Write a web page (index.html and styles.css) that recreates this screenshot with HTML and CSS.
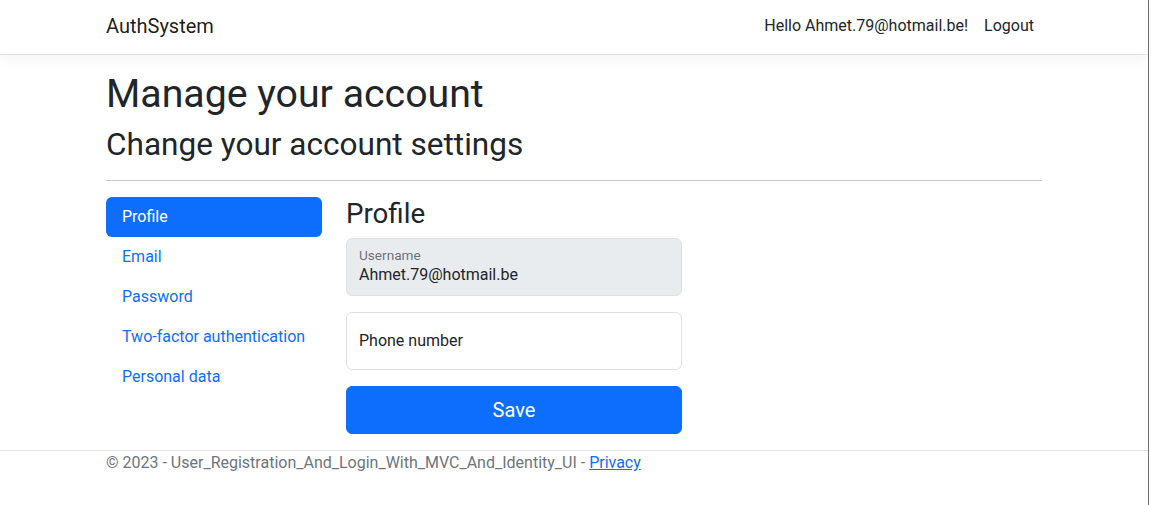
FILE: index.html
```html
<!DOCTYPE html>
<html lang="en">
<head>
<meta charset="utf-8">
<title>Profile - AuthSystem</title>
<link rel="stylesheet" href="styles.css">
</head>
<body>
<div class="page">
  <header class="navbar">
    <div class="container nav-inner">
      <a class="brand" href="#">AuthSystem</a>
      <ul class="nav-right">
        <li><a class="nav-link" href="#">Hello Ahmet.79@hotmail.be!</a></li>
        <li><a class="nav-link" href="#">Logout</a></li>
      </ul>
    </div>
  </header>
  <main class="container main">
    <h1 class="title">Manage your account</h1>
    <div>
      <h2 class="subtitle">Change your account settings</h2>
      <hr class="rule">
      <div class="row">
        <nav class="side">
          <a class="pill active" href="#">Profile</a>
          <a class="pill" href="#">Email</a>
          <a class="pill" href="#">Password</a>
          <a class="pill" href="#">Two-factor authentication</a>
          <a class="pill" href="#">Personal data</a>
        </nav>
        <section class="content">
          <h3 class="section-title">Profile</h3>
          <form class="form">
            <div class="field disabled">
              <span class="field-label">Username</span>
              <span class="field-value">Ahmet.79@hotmail.be</span>
            </div>
            <div class="field">
              <span class="field-placeholder">Phone number</span>
            </div>
            <button type="button" class="btn-save">Save</button>
          </form>
        </section>
      </div>
    </div>
  </main>
  <footer class="footer">
    <div class="container">
      <span class="muted">© 2023 - User_Registration_And_Login_With_MVC_And_Identity_UI - </span><a class="footer-link" href="#">Privacy</a>
    </div>
  </footer>
</div>
</body>
</html>
```

FILE: styles.css
```css
* { box-sizing: border-box; }
html, body { margin: 0; padding: 0; }
body {
  font-family: Roboto, "Liberation Sans", sans-serif;
  font-size: 16px;
  line-height: 1.5;
  color: #212529;
  background: #fff;
  overflow: hidden;
}
.page {
  width: 1149px;
  min-height: 505px;
  border-right: 1px solid #6e6e6e;
}
.container {
  width: 960px;
  margin: 0 auto;
  padding: 0 12px;
}
.navbar {
  height: 55px;
  border-bottom: 1px solid #dee2e6;
  box-shadow: 0 4px 12px rgba(0,0,0,.05);
  margin-bottom: 16px;
}
.nav-inner {
  height: 100%;
  display: flex;
  align-items: center;
  justify-content: space-between;
}
.brand {
  font-size: 20px;
  line-height: 30px;
  color: rgba(0,0,0,.9);
  text-decoration: none;
  margin-top: -3px;
}
.nav-right {
  list-style: none;
  margin: 0;
  padding: 0;
  display: flex;
  margin-top: -2px;
}
.nav-link {
  display: block;
  padding: 0 8px;
  color: #212529;
  text-decoration: none;
}
.main { padding-bottom: 16px; }
.title {
  font-size: 39.27px;
  font-weight: 400;
  line-height: 1.2;
  margin: 0 0 8px;
}
.subtitle {
  font-size: 31.56px;
  font-weight: 400;
  line-height: 1.2;
  margin: 0;
}
.rule {
  margin: 16px 0;
  border: 0;
  border-top: 1px solid #c8c9ca;
}
.row {
  display: flex;
  margin: 0 -12px;
}
.side {
  width: 240px;
  padding: 0 12px;
  display: flex;
  flex-direction: column;
}
.pill {
  display: block;
  padding: 8px 16px;
  color: #0d6efd;
  text-decoration: none;
  border-radius: 6px;
}
.pill.active {
  background: #0d6efd;
  color: #fff;
}
.content {
  width: 720px;
  padding: 0 12px;
}
.section-title {
  font-size: 27.7px;
  font-weight: 400;
  line-height: 1.2;
  margin: 0 0 8px;
}
.form {
  width: 336px;
  display: flex;
  flex-direction: column;
  gap: 16px;
}
.field {
  height: 58px;
  border: 1px solid #dee2e6;
  border-radius: 6px;
  padding: 0 12px;
  display: flex;
  flex-direction: column;
  justify-content: center;
  background: #fff;
}
.field.disabled {
  background: #e9ecef;
  justify-content: flex-start;
  padding-top: 8px;
}
.field-label {
  font-size: 13.6px;
  line-height: 16px;
  color: rgba(33,37,41,.65);
}
.field-value { line-height: 24px; }
.field-placeholder { line-height: 24px; color: #212529; }
.btn-save {
  height: 48px;
  border: 1px solid #0d6efd;
  background: #0d6efd;
  color: #fff;
  font-family: inherit;
  font-size: 20px;
  line-height: 30px;
  border-radius: 6px;
  padding: 0;
}
.footer {
  border-top: 1px solid #dee2e6;
  white-space: nowrap;
}
.muted { color: #6c757d; }
.footer-link { color: #0d6efd; text-decoration: underline; }
```
